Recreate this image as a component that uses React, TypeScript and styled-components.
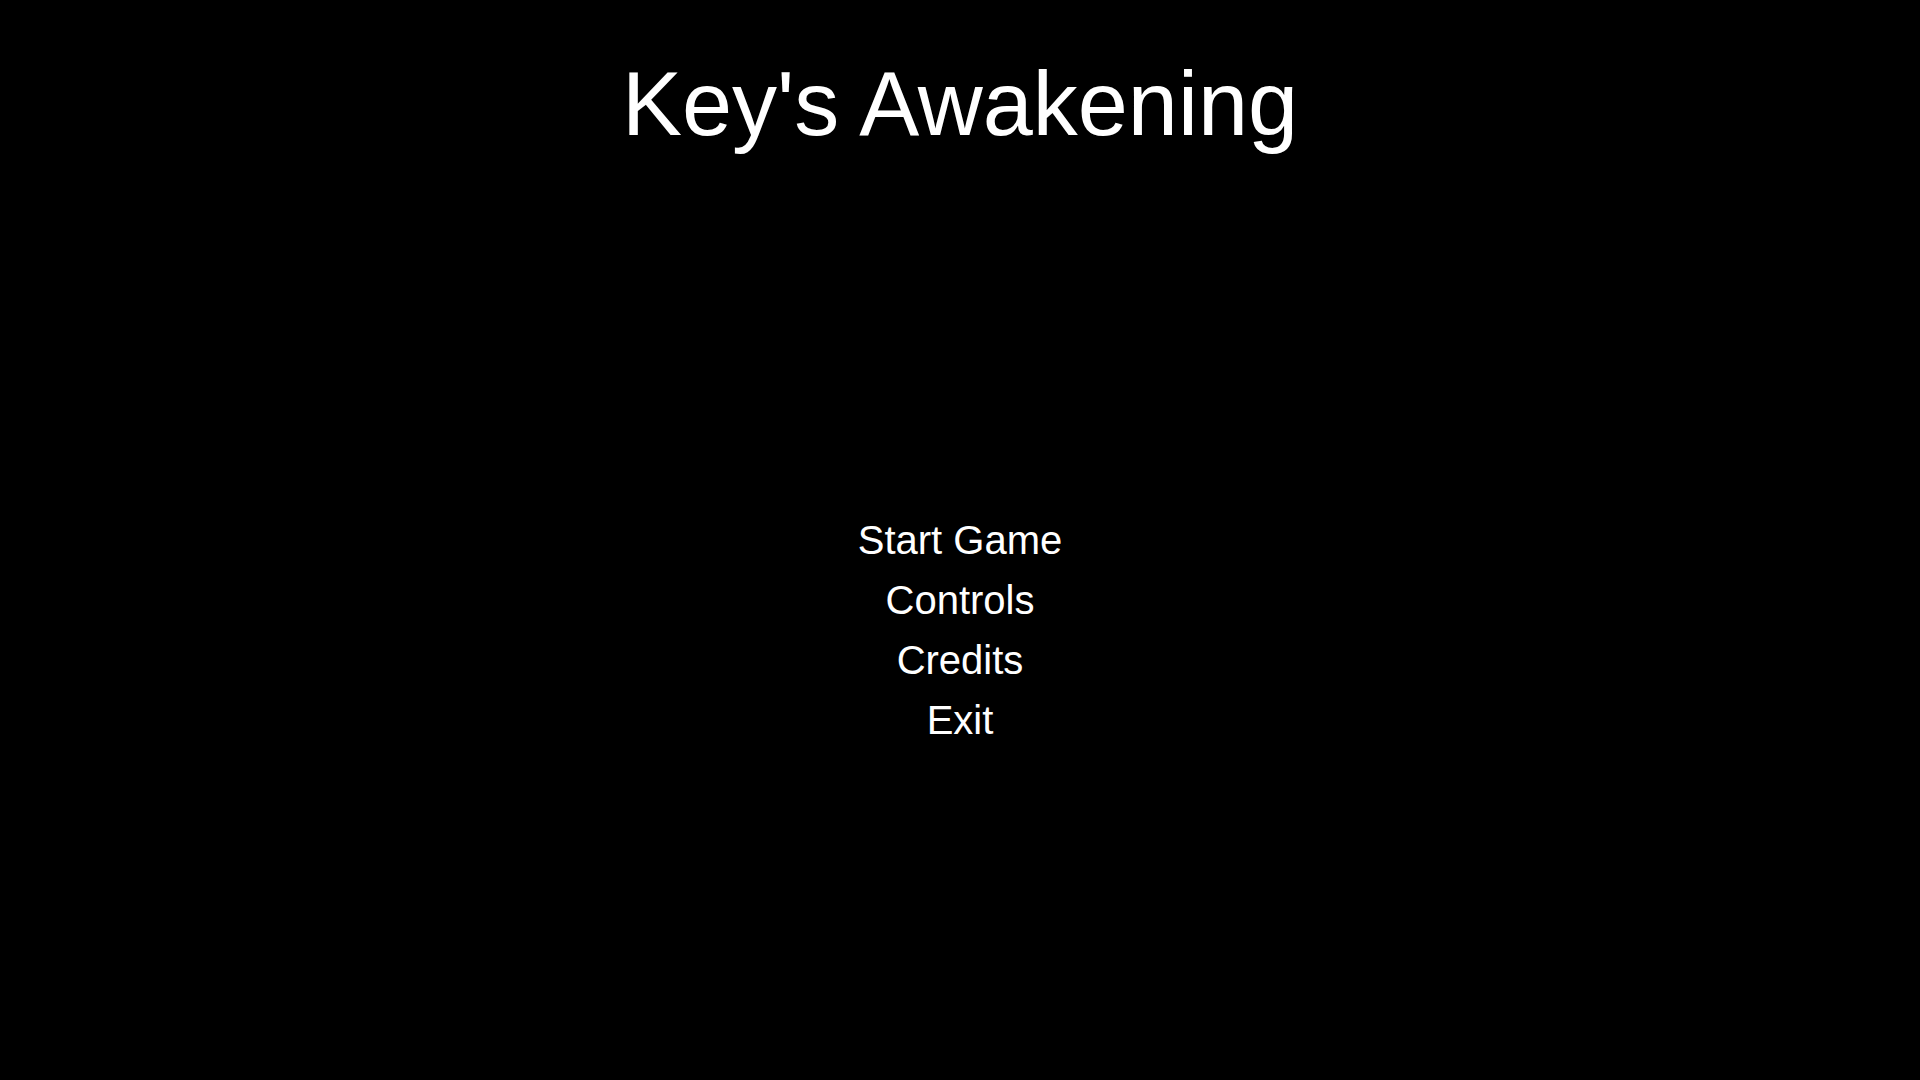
import React from "react";
import styled, { createGlobalStyle } from "styled-components";

const Global = createGlobalStyle`
  html, body {
    margin: 0;
    padding: 0;
    background: #000;
    color: #fff;
    font-family: "Liberation Sans", Arial, sans-serif;
  }
`;

const Screen = styled.main`
  min-height: 100vh;
  display: flex;
  flex-direction: column;
  align-items: center;
  background: #000;
`;

const Title = styled.h1`
  margin: 0;
  padding-top: 59px;
  font-size: 90px;
  line-height: 90px;
  font-weight: 400;
  color: #fff;
`;

const Menu = styled.nav`
  margin-top: 361px;
  display: flex;
  flex-direction: column;
  align-items: center;
`;

const MenuItem = styled.button`
  background: none;
  border: none;
  padding: 0;
  margin: 0;
  color: #fff;
  font-family: "Liberation Sans", Arial, sans-serif;
  font-size: 40px;
  line-height: 60px;
  cursor: pointer;
`;

const items = ["Start Game", "Controls", "Credits", "Exit"];

export default function App() {
  return (
    <>
      <Global />
      <Screen>
        <Title>Key's Awakening</Title>
        <Menu>
          {items.map((label) => (
            <MenuItem key={label}>{label}</MenuItem>
          ))}
        </Menu>
      </Screen>
    </>
  );
}
